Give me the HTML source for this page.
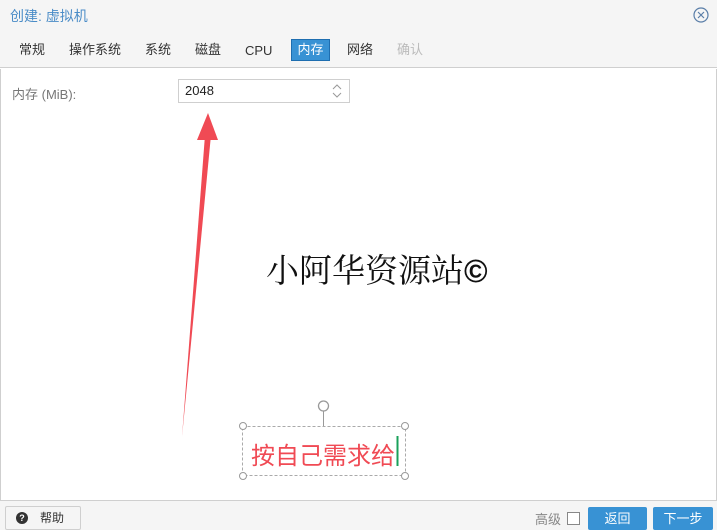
<!DOCTYPE html>
<html><head><meta charset="utf-8"><style>
*{margin:0;padding:0;box-sizing:border-box}
body{width:717px;height:530px;overflow:hidden;background:#fff;font-family:"Liberation Sans","Noto Sans CJK SC",sans-serif;position:relative;font-size:13px;color:#333}
.hdr{position:absolute;left:0;top:0;width:717px;height:68px;background:#f5f5f5;border-bottom:1px solid #cfcfcf}
.title{position:absolute;left:10px;top:6px;font-size:14px;color:#4a8cc7}
.tab{position:absolute;top:40px;height:20px;line-height:20px;font-size:13px;color:#333}
.act{position:absolute;left:291px;top:39px;width:39px;height:22px;background:#3892d4;border:1px solid #1e6eb0;color:#fff;text-align:center;line-height:20px;font-size:13px}
.body{position:absolute;left:0;top:69px;width:717px;height:431px;border-left:1px solid #cfcfcf;border-right:1px solid #cfcfcf}
.ftr{position:absolute;left:0;top:500px;width:717px;height:30px;background:#f5f5f5;border-top:1px solid #cfcfcf}
.btn{position:absolute;top:507px;height:23px;background:#3892d4;color:#fff;text-align:center;line-height:23px;border-radius:2px;font-size:13px}
</style></head><body>
<div class="hdr">
<div class="title">创建: 虚拟机</div>
<svg style="position:absolute;left:692px;top:6px" width="18" height="18"><circle cx="9" cy="9" r="7" fill="none" stroke="#5a7ea8" stroke-width="1.2"/><path d="M6 6L12 12M12 6L6 12" stroke="#5a7ea8" stroke-width="1.2"/></svg>
<span class="tab" style="left:19px">常规</span>
<span class="tab" style="left:69px">操作系统</span>
<span class="tab" style="left:145px">系统</span>
<span class="tab" style="left:195px">磁盘</span>
<span class="tab" style="left:245px;top:41px">CPU</span>
<div class="act">内存</div>
<span class="tab" style="left:347px">网络</span>
<span class="tab" style="left:397px;color:#bbb">确认</span>
</div>
<div class="body"></div>
<div style="position:absolute;left:12px;top:84px;color:#777;font-size:13px">内存 (MiB):</div>
<div style="position:absolute;left:178px;top:79px;width:172px;height:24px;border:1px solid #cfcfcf;background:#fff;font-size:13px;line-height:22px;padding-left:6px;color:#222">2048</div>
<svg style="position:absolute;left:330px;top:82px" width="14" height="18"><path d="M3 7L7 3L11 7M3 11L7 15L11 11" fill="none" stroke="#999" stroke-width="1"/></svg>
<svg style="position:absolute;left:0;top:0" width="717" height="530">
<path d="M182 437L205 135L211 135Z" fill="#f04a54"/>
<path d="M208 113L197 140L218 140Z" fill="#f04a54"/>
<rect x="242.5" y="426.5" width="163" height="49" fill="none" stroke="#aaa" stroke-dasharray="3,2"/>
<line x1="323.5" y1="411" x2="323.5" y2="426" stroke="#999"/>
<circle cx="323.5" cy="406" r="5" fill="#fff" stroke="#999" stroke-width="1.3"/>
<circle cx="243" cy="426" r="3.5" fill="#fff" stroke="#999"/>
<circle cx="405" cy="426" r="3.5" fill="#fff" stroke="#999"/>
<circle cx="243" cy="476" r="3.5" fill="#fff" stroke="#999"/>
<circle cx="405" cy="476" r="3.5" fill="#fff" stroke="#999"/>
<line x1="397.5" y1="436" x2="397.5" y2="466" stroke="#1aa05a" stroke-width="2"/>
</svg>
<div style="position:absolute;left:266px;top:245px;font-family:'Liberation Serif','Noto Serif CJK SC',serif;font-size:33px;color:#111;white-space:nowrap">小阿华资源站<span style="font-family:'Liberation Sans',sans-serif;font-weight:bold;font-size:32px">©</span></div>
<div style="position:absolute;left:251px;top:436px;font-size:24px;color:#f04a54;white-space:nowrap;font-family:'Liberation Sans','Noto Sans CJK SC',sans-serif">按自己需求给</div>
<div class="ftr"></div>
<div style="position:absolute;left:5px;top:506px;width:76px;height:24px;border:1px solid #cfcfcf;background:#f5f5f5;border-radius:2px;font-size:12px;line-height:22px">
<span style="position:absolute;left:10px;top:5px;width:12px;height:12px;border-radius:50%;background:#333;color:#fff;font-size:9px;line-height:12px;text-align:center;font-weight:bold">?</span><span style="position:absolute;left:34px;top:0">帮助</span></div>
<div style="position:absolute;left:535px;top:509px;color:#888;font-size:13px">高级</div>
<div style="position:absolute;left:567px;top:512px;width:13px;height:13px;border:1px solid #888;background:#fff"></div>
<div class="btn" style="left:588px;width:59px">返回</div>
<div class="btn" style="left:653px;width:60px">下一步</div>
</body></html>
